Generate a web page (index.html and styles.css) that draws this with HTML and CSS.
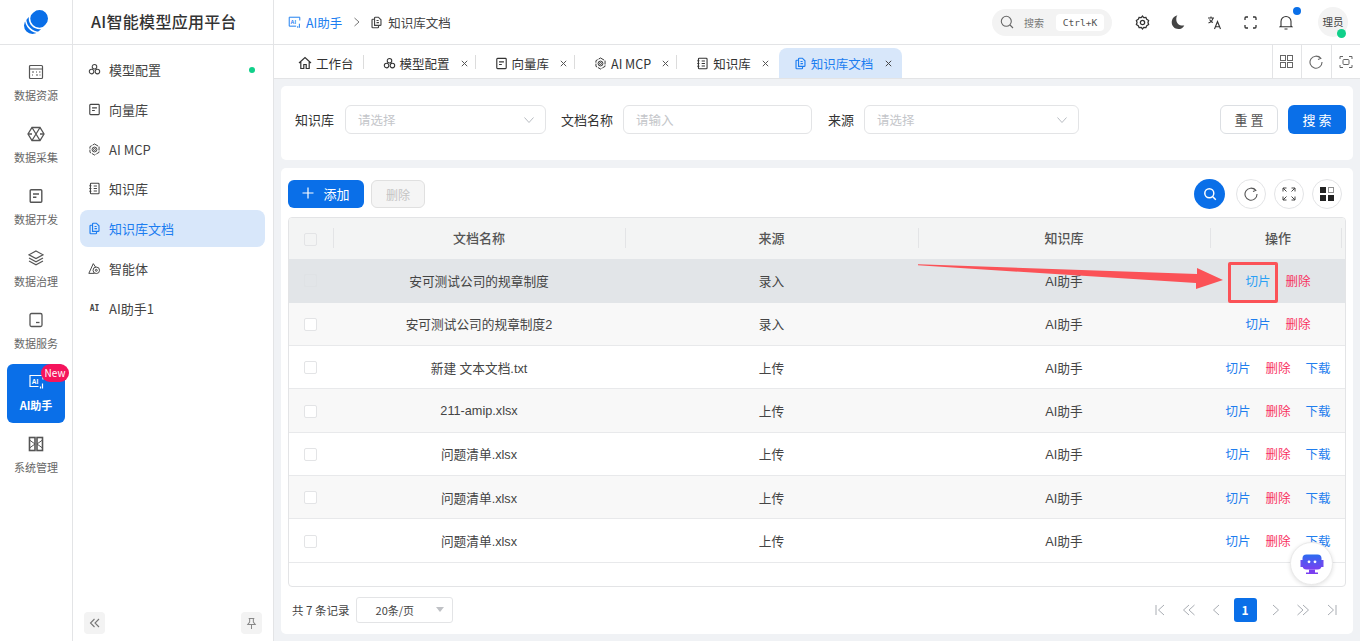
FILE: index.html
```html
<!DOCTYPE html>
<html lang="zh-CN">
<head>
    <meta charset="UTF-8">
    <meta name="viewport" content="width=device-width, initial-scale=1.0">
    <title>知识库文档 - AI智能模型应用平台</title>
    <link rel="stylesheet" href="styles.css">
</head>
<body>
    <svg class="icon-defs" width="0" height="0">
        <defs>
            <linearGradient id="chat-grad" x1="0" y1="0" x2="0" y2="1">
                <stop offset="0" stop-color="#2b6cf0"/>
                <stop offset="1" stop-color="#7a3ff0"/>
            </linearGradient>
        </defs>
        <symbol id="i-model" viewBox="0 0 16 16" fill="none" stroke="currentColor" stroke-width="1.3">
            <circle cx="8" cy="4.6" r="2.8"/><circle cx="4.4" cy="10.6" r="2.8"/><circle cx="11.6" cy="10.6" r="2.8"/>
        </symbol>
        <symbol id="i-vector" viewBox="0 0 16 16" fill="none" stroke="currentColor" stroke-width="1.4">
            <rect x="2.2" y="1.7" width="11.6" height="12.6" rx="1"/><path d="M5 6h6M5 9.2h3.4"/>
        </symbol>
        <symbol id="i-mcp" viewBox="0 0 16 16" fill="none" stroke="currentColor" stroke-width="1.2">
            <path d="M8 1.2l5.6 3.3v7L8 14.8l-5.6-3.3v-7z" stroke-dasharray="5 1.2"/><circle cx="8" cy="8" r="3"/><circle cx="8" cy="8" r="1.2"/>
        </symbol>
        <symbol id="i-book" viewBox="0 0 16 16" fill="none" stroke="currentColor" stroke-width="1.3">
            <rect x="3" y="1.6" width="10.6" height="12.8" rx="1"/><path d="M1.6 4.5h2.6M1.6 8h2.6M1.6 11.5h2.6M7 5h4M7 8h4M7 11h4"/>
        </symbol>
        <symbol id="i-docs" viewBox="0 0 16 16" fill="none" stroke="currentColor" stroke-width="1.4">
            <path d="M5.6 11.6V2.4c0-.5.4-.9.9-.9h3.8l3.2 3.2v6c0 .5-.4.9-.9.9z"/><path d="M5.6 4H3.4c-.5 0-.9.4-.9.9v8.7c0 .5.4.9.9.9h6.2c.5 0 .9-.4.9-.9v-2"/><path d="M8 5.6h2.6M8 8.2h3"/>
        </symbol>
        <symbol id="i-agent" viewBox="0 0 16 16" fill="none" stroke="currentColor" stroke-width="1.2">
            <path d="M6.5 2L1 14h7"/><path d="M6.5 2l3 4.5"/><circle cx="10.2" cy="10.2" r="4"/><circle cx="10.2" cy="10.2" r="1.2"/>
        </symbol>
        <symbol id="i-res" viewBox="0 0 16 16" fill="none" stroke="currentColor" stroke-width="1.2">
            <rect x="1.5" y="1.5" width="13" height="13" rx="1"/><path d="M1.5 5h13M4 8h2M8 8h1M11 8h1.5M4 11h1M8 11h2M11.5 11h1"/>
        </symbol>
        <symbol id="i-collect" viewBox="0 0 18 16" fill="none" stroke="currentColor" stroke-width="1.3">
            <path d="M5 1.5h8L17 8l-4 6.5H5L1 8z"/><path d="M5 1.5L13 14.5M13 1.5L5 14.5M1 8h4M13 8h4"/>
        </symbol>
        <symbol id="i-layers" viewBox="0 0 16 16" fill="none" stroke="currentColor" stroke-width="1.1">
            <path d="M8 1L15 4.8 8 8.6 1 4.8z"/><path d="M1 8l7 3.8L15 8M1 11l7 3.8 7-3.8"/>
        </symbol>
        <symbol id="i-serve" viewBox="0 0 16 16" fill="none" stroke="currentColor" stroke-width="1.3">
            <rect x="2" y="1.5" width="12" height="13" rx="1.5"/><path d="M8 10.5h3.5"/>
        </symbol>
        <symbol id="i-sys" viewBox="0 0 16 16" fill="none" stroke="currentColor" stroke-width="1.6">
            <rect x="1.5" y="1.5" width="5.5" height="13"/><rect x="9" y="1.5" width="5.5" height="13"/><path d="M1.5 4L7 8l-5.5 4M14.5 4L9 8l5.5 4" stroke-width="1"/>
        </symbol>
        <symbol id="i-close" viewBox="0 0 10 10" fill="none" stroke="currentColor" stroke-width="1.1">
            <path d="M2 2l6 6M8 2L2 8"/>
        </symbol>
        <symbol id="i-chev" viewBox="0 0 12 12" fill="none" stroke="currentColor" stroke-width="1">
            <path d="M1.5 3.5L6 8.5l4.5-5"/>
        </symbol>
    </svg>

    <div class="app">
        <!-- first column -->
        <aside class="rail">
            <div class="rail-logo">
                <svg width="26" height="26" viewBox="0 0 26 26">
                    <path d="M16.5 9.5L9.5 16.5" stroke="#0a6fe8" stroke-width="17" stroke-linecap="round"/>
                    <circle cx="16.5" cy="9.5" r="10" fill="none" stroke="#fff" stroke-width="1.5"/>
                    <circle cx="16.5" cy="9.5" r="14" fill="none" stroke="#fff" stroke-width="1.5"/>
                </svg>
            </div>
            <nav class="rail-nav">
                <a class="rail-item"><svg width="16" height="16"><use href="#i-res"/></svg><span>数据资源</span></a>
                <a class="rail-item"><svg width="18" height="16"><use href="#i-collect"/></svg><span>数据采集</span></a>
                <a class="rail-item"><svg width="16" height="16"><use href="#i-vector"/></svg><span>数据开发</span></a>
                <a class="rail-item"><svg width="16" height="16"><use href="#i-layers"/></svg><span>数据治理</span></a>
                <a class="rail-item"><svg width="16" height="16"><use href="#i-serve"/></svg><span>数据服务</span></a>
                <a class="rail-item active">
                    <svg width="17" height="16" viewBox="0 0 16 16" fill="none" stroke="currentColor" stroke-width="1.2"><path d="M14.5 5.5V1.5h-13v11H10M12 14.5v-2M14 14.5v-5"/><text x="3.2" y="9.6" class="icon-text">AI</text></svg>
                    <span>AI助手</span><em class="badge-new">New</em>
                </a>
                <a class="rail-item"><svg width="16" height="16"><use href="#i-sys"/></svg><span>系统管理</span></a>
            </nav>
        </aside>

        <!-- second column -->
        <aside class="side">
            <div class="side-title">AI智能模型应用平台</div>
            <nav class="side-nav">
                <a class="side-item"><svg width="13" height="13"><use href="#i-model"/></svg>模型配置<i class="side-dot"></i></a>
                <a class="side-item"><svg width="13" height="13"><use href="#i-vector"/></svg>向量库</a>
                <a class="side-item"><svg width="13" height="13"><use href="#i-mcp"/></svg>AI MCP</a>
                <a class="side-item"><svg width="13" height="13"><use href="#i-book"/></svg>知识库</a>
                <a class="side-item active"><svg width="13" height="13"><use href="#i-docs"/></svg>知识库文档</a>
                <a class="side-item"><svg width="13" height="13"><use href="#i-agent"/></svg>智能体</a>
                <a class="side-item"><span class="mini-ai">AI</span>AI助手1</a>
            </nav>
            <div class="side-foot">
                <button class="foot-btn">
                    <svg width="12" height="12" viewBox="0 0 12 12" fill="none" stroke="#777" stroke-width="1.1"><path d="M5.5 2L1.5 6l4 4M10 2L6 6l4 4"/></svg>
                </button>
                <button class="foot-btn">
                    <svg width="13" height="13" viewBox="0 0 14 14" fill="none" stroke="#888" stroke-width="1.1"><path d="M4 1.5h6M5 1.5v4L3 8h8L9 5.5v-4M7 8v5"/></svg>
                </button>
            </div>
        </aside>

        <main class="main">
            <header class="topbar">
                <div class="crumbs">
                    <svg class="crumb-blue" width="13" height="13" viewBox="0 0 16 16" fill="none" stroke="currentColor" stroke-width="1.2"><path d="M14.5 5.5V1.5h-13v11H10M12 14.5v-2M14 14.5v-5"/><text x="3.2" y="9.6" class="icon-text">AI</text></svg>
                    <span class="crumb-blue">AI助手</span>
                    <svg class="crumb-sep" width="8" height="10" viewBox="0 0 8 10" fill="none" stroke="#777" stroke-width="1"><path d="M1.5 1L6 5 1.5 9"/></svg>
                    <svg width="13" height="13"><use href="#i-docs"/></svg>
                    <span>知识库文档</span>
                </div>
                <div class="top-tools">
                    <div class="global-search">
                        <svg width="14" height="14" viewBox="0 0 14 14" fill="none" stroke="#666" stroke-width="1.1"><circle cx="6.3" cy="6.3" r="5"/><path d="M10 10l3 3"/></svg>
                        <span>搜索</span>
                        <kbd>Ctrl+K</kbd>
                    </div>
                    <button class="tool-btn">
                        <svg width="15" height="15" viewBox="0 0 14 14" fill="none" stroke="#333" stroke-width="1.2"><path d="M7 1l1.2 1.5 2-.2.8 1.8 1.7 1L12.1 7l.6 1.9-1.7 1-.8 1.8-2-.2L7 13l-1.2-1.5-2 .2-.8-1.8-1.7-1L1.9 7l-.6-1.9 1.7-1 .8-1.8 2 .2z"/><circle cx="7" cy="7" r="2"/></svg>
                    </button>
                    <button class="tool-btn">
                        <svg width="16" height="16" viewBox="0 0 14 14"><path d="M6.5 1C3.5 1.7 1.5 4.2 1.5 7.3c0 3.4 2.6 5.9 5.8 5.9 2.2 0 4.3-1.2 5.2-3.2-3.7.8-7-1.6-7-5.2 0-1.700.3-3.300 1-3.800z" fill="#444"/></svg>
                    </button>
                    <button class="tool-btn">
                        <svg width="15" height="15" viewBox="0 0 15 15" fill="none" stroke="#333" stroke-width="1.1"><path d="M1 3h6M4 1.5V3M6 3c-.4 2.3-2 4-4.5 5M2.5 4.500c.8 1.500 2 2.500 3.500 3M7.500 14l3-7.500 3 7.500M8.500 11.700h4"/></svg>
                    </button>
                    <button class="tool-btn">
                        <svg width="13" height="13" viewBox="0 0 13 13" fill="none" stroke="#333" stroke-width="1.3"><path d="M1 4V2a1 1 0 0 1 1-1h2M9 1h2a1 1 0 0 1 1 1v2M12 9v2a1 1 0 0 1-1 1H9M4 12H2a1 1 0 0 1-1-1V9"/></svg>
                    </button>
                    <button class="tool-btn bell">
                        <svg width="14" height="15" viewBox="0 0 14 15" fill="none" stroke="#333" stroke-width="1.1"><path d="M2 11V6.5a5 5 0 0 1 10 0V11l1 .8H1zM5.5 14h3"/></svg>
                        <i class="bell-dot"></i>
                    </button>
                    <div class="avatar">理员<i class="avatar-dot"></i></div>
                </div>
            </header>

            <div class="tabs">
                <div class="tab-list">
                    <a class="tab no-close"><svg width="14" height="14" viewBox="0 0 14 14" fill="none" stroke="#333" stroke-width="1.2"><path d="M1 7l6-5.5L13 7M2.8 6v6.5h3v-4h2.4v4h3V6"/></svg>工作台</a>
                    <a class="tab"><svg width="13" height="13"><use href="#i-model"/></svg>模型配置<svg class="tab-x" width="9" height="9"><use href="#i-close"/></svg></a>
                    <a class="tab"><svg width="13" height="13"><use href="#i-vector"/></svg>向量库<svg class="tab-x" width="9" height="9"><use href="#i-close"/></svg></a>
                    <a class="tab"><svg width="13" height="13"><use href="#i-mcp"/></svg>AI MCP<svg class="tab-x" width="9" height="9"><use href="#i-close"/></svg></a>
                    <a class="tab last"><svg width="13" height="13"><use href="#i-book"/></svg>知识库<svg class="tab-x" width="9" height="9"><use href="#i-close"/></svg></a>
                    <a class="tab active"><svg width="13" height="13"><use href="#i-docs"/></svg>知识库文档<svg class="tab-x" width="9" height="9"><use href="#i-close"/></svg></a>
                </div>
                <div class="tab-tools">
                    <button><svg width="13" height="13" viewBox="0 0 13 13" fill="none" stroke="#666"><rect x=".5" y=".5" width="5" height="5"/><rect x="7.5" y=".5" width="5" height="5"/><rect x=".5" y="7.5" width="5" height="5"/><rect x="7.5" y="7.5" width="5" height="5"/></svg></button>
                    <button><svg width="14" height="14" viewBox="0 0 14 14" fill="none" stroke="#666" stroke-width="1.1"><path d="M11.5 3.2A6 6 0 1 0 13 7M9.5 1.2l2.3 2.2-2.8 1"/></svg></button>
                    <button><svg width="14" height="14" viewBox="0 0 14 14" fill="none" stroke="#666"><path d="M1 4V1.5h3M10 1.5h3V4M13 10v2.5h-3M4 12.5H1V10"/><rect x="4" y="4.5" width="6" height="5" rx="1"/></svg></button>
                </div>
            </div>

            <div class="content">
                <section class="card filter-card">
                    <label class="f-label">知识库</label>
                    <div class="f-box w-201">请选择<svg width="12" height="12"><use href="#i-chev"/></svg></div>
                    <label class="f-label">文档名称</label>
                    <div class="f-box w-189">请输入</div>
                    <label class="f-label">来源</label>
                    <div class="f-box w-215">请选择<svg width="12" height="12"><use href="#i-chev"/></svg></div>
                    <div class="f-actions">
                        <button class="btn btn-plain">重 置</button>
                        <button class="btn btn-blue">搜 索</button>
                    </div>
                </section>

                <section class="card table-card">
                    <div class="toolbar">
                        <button class="btn btn-blue btn-add"><svg width="12" height="12" viewBox="0 0 12 12" stroke="#fff" stroke-width="1.2"><path d="M6 .5v11M.5 6h11"/></svg>添加</button>
                        <button class="btn btn-off">删除</button>
                        <div class="round-tools">
                            <button class="round blue"><svg width="14" height="14" viewBox="0 0 14 14" fill="none" stroke="#fff" stroke-width="1.5"><circle cx="6.3" cy="6.3" r="4.5"/><path d="M9.8 9.8l3 3"/></svg></button>
                            <button class="round"><svg width="14" height="14" viewBox="0 0 14 14" fill="none" stroke="#555" stroke-width="1.1"><path d="M11.5 3.2A6 6 0 1 0 13 7M9.5 1.2l2.3 2.2-2.8 1"/></svg></button>
                            <button class="round"><svg width="14" height="14" viewBox="0 0 14 14" fill="none" stroke="#444" stroke-width="1"><path d="M1 4.5V1h3.5M1 1l3.5 3.5M9.5 1H13v3.5M13 1L9.5 4.5M13 9.5V13H9.5M13 13L9.5 9.5M4.5 13H1V9.5M1 13l3.5-3.5"/></svg></button>
                            <button class="round"><svg width="14" height="14" viewBox="0 0 14 14"><g fill="#222"><rect width="6" height="6"/><rect y="8" width="6" height="6"/><rect x="8" y="8" width="6" height="6"/></g><rect x="8.5" y=".5" width="5" height="5" fill="none" stroke="#222" stroke-dasharray="1 1"/></svg></button>
                        </div>
                    </div>

                    <div class="table-wrap">
                        <table class="doc-table">
                            <colgroup>
                                <col class="c-check"><col class="c-wide"><col class="c-mid"><col class="c-wide"><col>
                            </colgroup>
                            <thead>
                                <tr>
                                    <th class="cell-check"><i class="check"></i></th>
                                    <th>文档名称</th>
                                    <th>来源</th>
                                    <th>知识库</th>
                                    <th class="th-last">操作</th>
                                </tr>
                            </thead>
                            <tbody>
                                <tr class="hover">
                                    <td class="cell-check"><i class="check"></i></td><td>安可测试公司的规章制度</td><td>录入</td><td>AI助手</td>
                                    <td class="ops"><a class="op-slice">切片</a><a class="op-del">删除</a></td>
                                </tr>
                                <tr>
                                    <td class="cell-check"><i class="check"></i></td><td>安可测试公司的规章制度2</td><td>录入</td><td>AI助手</td>
                                    <td class="ops"><a class="op-slice">切片</a><a class="op-del">删除</a></td>
                                </tr>
                                <tr>
                                    <td class="cell-check"><i class="check"></i></td><td>新建 文本文档.txt</td><td>上传</td><td>AI助手</td>
                                    <td class="ops"><a class="op-slice">切片</a><a class="op-del">删除</a><a class="op-slice">下载</a></td>
                                </tr>
                                <tr>
                                    <td class="cell-check"><i class="check"></i></td><td>211-amip.xlsx</td><td>上传</td><td>AI助手</td>
                                    <td class="ops"><a class="op-slice">切片</a><a class="op-del">删除</a><a class="op-slice">下载</a></td>
                                </tr>
                                <tr>
                                    <td class="cell-check"><i class="check"></i></td><td>问题清单.xlsx</td><td>上传</td><td>AI助手</td>
                                    <td class="ops"><a class="op-slice">切片</a><a class="op-del">删除</a><a class="op-slice">下载</a></td>
                                </tr>
                                <tr>
                                    <td class="cell-check"><i class="check"></i></td><td>问题清单.xlsx</td><td>上传</td><td>AI助手</td>
                                    <td class="ops"><a class="op-slice">切片</a><a class="op-del">删除</a><a class="op-slice">下载</a></td>
                                </tr>
                                <tr>
                                    <td class="cell-check"><i class="check"></i></td><td>问题清单.xlsx</td><td>上传</td><td>AI助手</td>
                                    <td class="ops"><a class="op-slice">切片</a><a class="op-del">删除</a><a class="op-slice">下载</a></td>
                                </tr>
                            </tbody>
                        </table>
                    </div>

                    <div class="pager-row">
                        <span class="total">共 7 条记录</span>
                        <div class="size-select">20条/页<i class="caret"></i></div>
                        <div class="pager">
                            <svg width="12" height="12" viewBox="0 0 12 12"><path d="M2 1v10M10 1L4.5 6l5.5 5"/></svg>
                            <svg width="14" height="12" viewBox="0 0 14 12"><path d="M7 1L1.5 6 7 11M12.5 1L7 6l5.5 5"/></svg>
                            <svg width="8" height="12" viewBox="0 0 8 12"><path d="M7 1L1.5 6 7 11"/></svg>
                            <b class="page-on">1</b>
                            <svg width="8" height="12" viewBox="0 0 8 12"><path d="M1 1l5.5 5L1 11"/></svg>
                            <svg width="14" height="12" viewBox="0 0 14 12"><path d="M1.5 1L7 6l-5.5 5M7 1l5.5 5L7 11"/></svg>
                            <svg width="12" height="12" viewBox="0 0 12 12"><path d="M2 1l5.5 5L2 11M10 1v10"/></svg>
                        </div>
                    </div>
                </section>
            </div>
        </main>
    </div>

    <!-- annotation drawn over the screenshot -->
    <svg class="mark-arrow" width="310" height="30" viewBox="918 262 310 30"><path d="M918 264.3L1197 274 1197 268 1223 280 1196 289 1196 283 918 265.3z" fill="#fb5257"/></svg>
    <div class="mark-box"></div>

    <button class="chat-fab">
        <svg width="26" height="24" viewBox="0 0 26 24">
            <path d="M1.5 8h3v7h-3zM21.5 8h3v7h-3z" fill="#6a4cf0"/>
            <rect x="3.5" y="2.5" width="19" height="15" rx="4" fill="url(#chat-grad)"/>
            <path d="M10 17.5h6v3h3V22H7v-1.5h3z" fill="#7a3ff0"/>
            <circle cx="10" cy="9.8" r="1.4" fill="#fff"/><circle cx="16" cy="9.8" r="1.4" fill="#fff"/>
        </svg>
    </button>
</body>
</html>
```

FILE: styles.css
```css
* {
    margin: 0;
    padding: 0;
    box-sizing: border-box;
}

html, body {
    height: 100%;
    overflow: hidden;
}

body {
    font-family: "Noto Sans CJK SC", "Noto Sans", sans-serif;
    font-size: 13px;
    color: #333;
    background: #fff;
}

button {
    font-family: inherit;
    border: none;
    background: none;
    cursor: pointer;
}

a {
    cursor: pointer;
}

.icon-defs {
    position: absolute;
}

.icon-text {
    font-family: "Liberation Sans", sans-serif;
    font-size: 6.5px;
    font-weight: 700;
    fill: currentColor;
    stroke: none;
}

.app {
    display: flex;
    height: 641px;
}

/* rail */
.rail {
    width: 73px;
    flex-shrink: 0;
    border-right: 1px solid #e3e4e6;
}

.rail-logo {
    height: 45px;
    border-bottom: 1px solid #e3e4e6;
    display: flex;
    align-items: center;
    justify-content: center;
}

.rail-nav {
    display: flex;
    flex-direction: column;
    gap: 3px;
    padding: 9px 7px 0;
}

.rail-item {
    position: relative;
    height: 59px;
    display: flex;
    flex-direction: column;
    align-items: center;
    padding-top: 10px;
    gap: 7px;
    font-size: 11px;
    line-height: 17px;
    color: #666;
    border-radius: 6px;
}

.rail-item svg {
    height: 16px;
    color: #555;
}

.rail-item.active {
    background: #0a6fe8;
    color: #fff;
    font-weight: 700;
}

.rail-item.active svg {
    color: #fff;
}

.badge-new {
    position: absolute;
    top: 0;
    right: -4px;
    height: 18px;
    width: 28px;
    border-radius: 9px;
    background: #f5145c;
    font-style: normal;
    font-weight: 400;
    font-size: 10px;
    line-height: 18px;
    text-align: center;
    color: #fff;
}

/* second column */
.side {
    width: 201px;
    flex-shrink: 0;
    display: flex;
    flex-direction: column;
    border-right: 1px solid #e3e4e6;
}

.side-title {
    height: 45px;
    flex-shrink: 0;
    border-bottom: 1px solid #e3e4e6;
    padding-left: 18px;
    font-size: 16px;
    font-weight: 500;
    letter-spacing: 0.3px;
    line-height: 43px;
    color: #333;
}

.side-nav {
    display: flex;
    flex-direction: column;
    gap: 2.75px;
    padding: 6px 8px 0 7px;
    flex: 1;
}

.side-item {
    height: 37px;
    display: flex;
    align-items: center;
    gap: 8px;
    padding-left: 8px;
    border-radius: 8px;
    color: #444;
}

.side-item.active {
    background: #d8e7fa;
    color: #1c7df0;
}

.side-dot {
    width: 6px;
    height: 6px;
    margin-left: auto;
    margin-right: 10px;
    border-radius: 50%;
    background: #10d08a;
}

.mini-ai {
    width: 13px;
    font-family: "DejaVu Sans Mono", monospace;
    font-size: 8px;
    font-weight: 700;
    text-align: center;
}

.side-foot {
    display: flex;
    justify-content: space-between;
    padding: 0 11px 7px 11px;
}

.foot-btn {
    width: 21px;
    height: 22px;
    border-radius: 4px;
    background: #f3f3f3;
    display: flex;
    align-items: center;
    justify-content: center;
}

/* main */
.main {
    flex: 1;
    min-width: 0;
    display: flex;
    flex-direction: column;
}

.topbar {
    height: 45px;
    flex-shrink: 0;
    border-bottom: 1px solid #e3e4e6;
    display: flex;
    align-items: center;
    justify-content: space-between;
    padding: 0 12px 0 14px;
}

.crumbs {
    display: flex;
    align-items: center;
    gap: 5px;
    font-size: 12.5px;
    color: #444;
}

.crumb-blue {
    color: #1c7df0;
}

.crumb-sep {
    margin: 0 4px 0 6px;
}

.top-tools {
    display: flex;
    align-items: center;
}

.global-search {
    width: 120px;
    height: 27px;
    border-radius: 14px;
    background: #f3f3f3;
    display: flex;
    align-items: center;
    padding-left: 8px;
    font-size: 10px;
    color: #777;
}

.global-search span {
    margin-left: 10px;
}

.global-search kbd {
    margin-left: 12px;
    width: 48px;
    height: 17px;
    border-radius: 4px;
    background: #fff;
    font-family: "DejaVu Sans Mono", monospace;
    font-size: 9.5px;
    line-height: 17px;
    text-align: center;
    color: #555;
}

.tool-btn {
    position: relative;
    width: 36px;
    height: 28px;
    display: flex;
    align-items: center;
    justify-content: center;
}

.tool-btn:first-of-type {
    margin-left: 12px;
}

.bell-dot {
    position: absolute;
    top: -1px;
    right: 3px;
    width: 8px;
    height: 8px;
    border-radius: 50%;
    background: #0a6fe8;
}

.avatar {
    position: relative;
    width: 30px;
    height: 30px;
    margin-left: 14px;
    border-radius: 50%;
    background: #f3f3f3;
    font-size: 10.5px;
    line-height: 30px;
    text-align: center;
    color: #444;
    white-space: nowrap;
}

.avatar-dot {
    position: absolute;
    right: 2px;
    bottom: -1px;
    width: 9px;
    height: 9px;
    border-radius: 50%;
    background: #10d08a;
}

/* tabs */
.tabs {
    height: 34px;
    flex-shrink: 0;
    border-bottom: 1px solid #e3e4e6;
    display: flex;
    justify-content: space-between;
}

.tab-list {
    display: flex;
    align-items: stretch;
    padding-left: 5px;
    padding-top: 3px;
}

.tab {
    position: relative;
    display: flex;
    align-items: center;
    gap: 4px;
    padding: 0 7px 0 19px;
    font-size: 12.5px;
    color: #333;
}

.tab::after {
    content: "";
    position: absolute;
    right: 0;
    top: 7px;
    height: 14px;
    width: 1px;
    background: #dcdcdc;
}

.tab.no-close {
    padding-left: 19px;
    padding-right: 10px;
}

.tab.last::after,
.tab.active::after {
    display: none;
}

.tab-x {
    margin-left: 6px;
    color: #555;
}

.tab.active {
    background: #d8e7fa;
    color: #1c7df0;
    border-radius: 8px 8px 0 0;
    padding: 0 9px 0 15px;
}

.tab.active .tab-x {
    color: #444;
    margin-left: 7px;
}

.tab.last {
    padding-right: 9px;
}

.tab-tools {
    display: flex;
}

.tab-tools button {
    width: 29.5px;
    display: flex;
    align-items: center;
    justify-content: center;
    border-left: 1px solid #e3e4e6;
}

/* content */
.content {
    flex: 1;
    background: #f0f2f5;
    padding: 7px;
    display: flex;
    flex-direction: column;
    gap: 8px;
}

.card {
    background: #fff;
    border-radius: 5px;
}

.filter-card {
    height: 74px;
    flex-shrink: 0;
    display: flex;
    align-items: center;
    padding: 0 7px 7px 14px;
}

.f-label {
    color: #333;
    font-size: 13px;
    white-space: nowrap;
}

.f-box {
    height: 29px;
    margin-left: 11px;
    margin-right: 15px;
    padding: 0 10px 0 12px;
    border: 1px solid #e3e4e6;
    border-radius: 6px;
    display: flex;
    align-items: center;
    justify-content: space-between;
    font-size: 12.5px;
    color: #c4c6ca;
}

.f-box svg {
    color: #b8bcc2;
}

.w-201 { width: 201px; }
.w-189 { width: 189px; margin-left: 10px; margin-right: 16px; }
.w-215 { width: 215px; margin-left: 10px; }

.f-actions {
    margin-left: auto;
    display: flex;
    gap: 10px;
}

.btn {
    height: 29px;
    width: 58px;
    border-radius: 6px;
    font-size: 13px;
}

.btn-blue {
    background: #0a6fe8;
    color: #fff;
}

.btn-plain {
    background: #fff;
    border: 1px solid #dcdfe3;
    color: #555;
}

.btn-off {
    width: 54px;
    height: 28px;
    margin-top: 1px;
    background: #f5f5f5;
    border: 1px solid #e0e0e0;
    color: #c4c4c4;
    font-size: 12px;
}

.table-card {
    flex: 1;
    padding: 11px 7px 0;
    display: flex;
    flex-direction: column;
}

.toolbar {
    height: 38px;
    flex-shrink: 0;
    display: flex;
    align-items: flex-start;
    gap: 7px;
}

.btn-add {
    width: 76px;
    height: 28px;
    margin-top: 1px;
    padding-bottom: 2px;
    display: flex;
    align-items: center;
    justify-content: center;
    gap: 9px;
}

.round-tools {
    margin-left: auto;
    margin-right: 4px;
    display: flex;
    gap: 8px;
}

.round {
    width: 30px;
    height: 30px;
    border-radius: 50%;
    border: 1px solid #e3e4e6;
    display: flex;
    align-items: center;
    justify-content: center;
}

.round.blue {
    width: 31px;
    margin-right: 3px;
    border: none;
    background: #0a6fe8;
}

.table-wrap {
    height: 370px;
    flex-shrink: 0;
    border: 1px solid #e3e4e6;
    border-radius: 4px;
    overflow: hidden;
}

.doc-table {
    width: 100%;
    table-layout: fixed;
    border-collapse: collapse;
    font-family: "Liberation Sans", "Noto Sans CJK SC", sans-serif;
    font-size: 12.7px;
    color: #444;
}

.c-check { width: 45px; }
.c-wide { width: 292px; }
.c-mid { width: 293px; }

.doc-table th {
    position: relative;
    height: 41px;
    padding-right: 2px;
    padding-bottom: 3px;
    background: #f3f4f4;
    font-weight: 500;
    font-size: 13px;
    color: #555;
}

.doc-table th.cell-check {
    padding-bottom: 0;
}

.doc-table th.th-last {
    padding-right: 0;
}

.doc-table th::after {
    content: "";
    position: absolute;
    right: 0;
    top: 10px;
    height: 20px;
    width: 1px;
    background: #e3e4e6;
}

.doc-table th.th-last::after {
    right: 3px;
}

.doc-table td {
    height: 43.3px;
    padding-right: 2px;
    text-align: center;
    border-bottom: 1px solid #e8e9eb;
}

.doc-table td.ops {
    padding-right: 0;
}

.doc-table tbody tr:nth-child(even) td {
    background: #f8f8f8;
}

.doc-table tbody tr.hover td {
    background: #e2e5e8;
    border-bottom-color: #e2e5e8;
}

.check {
    display: inline-block;
    vertical-align: middle;
    width: 13px;
    height: 13px;
    border: 1px solid #e3e4e6;
    border-radius: 2px;
    background: #fff;
}

.doc-table th .check {
    background: #f3f4f4;
}

.doc-table tr.hover .check {
    background: #e2e5e8;
    border-color: #dfe2e5;
}

.ops {
    white-space: nowrap;
}

.ops a {
    display: inline-block;
    margin: 0 7.5px;
    font-size: 12.5px;
}

.op-slice {
    color: #1f7eee;
}

.op-del {
    color: #f8305f;
}

tr.hover .op-slice {
    color: #2aa0f5;
}

.pager-row {
    flex: 1;
    display: flex;
    align-items: center;
    padding: 0 4px 2px;
    font-size: 11.5px;
    color: #444;
}

.size-select {
    position: relative;
    width: 97px;
    height: 26px;
    margin-left: 6px;
    padding-left: 19px;
    border: 1px solid #e3e4e6;
    border-radius: 3px;
    font-size: 11px;
    line-height: 24px;
}

.total {
    white-space: nowrap;
}

.caret {
    position: absolute;
    right: 8px;
    top: 9px;
    border-left: 4.5px solid transparent;
    border-right: 4.5px solid transparent;
    border-top: 5px solid #bfc1c5;
}

.pager {
    margin-left: auto;
    margin-right: 4px;
    display: flex;
    align-items: center;
    gap: 16px;
}

.pager svg {
    fill: none;
    stroke: #a9adb3;
    stroke-width: 1;
}

.page-on {
    width: 23px;
    height: 24px;
    margin: 0 -0.5px 0 -2px;
    border-radius: 3px;
    background: #0a6fe8;
    color: #fff;
    font-size: 12px;
    line-height: 24px;
    text-align: center;
}

/* overlays */
.mark-arrow {
    position: absolute;
    left: 918px;
    top: 262px;
}

.mark-box {
    position: absolute;
    left: 1228px;
    top: 262px;
    width: 50px;
    height: 41px;
    border: 3.5px solid #fb5257;
    border-radius: 2px;
}

.chat-fab {
    position: absolute;
    left: 1290px;
    top: 542px;
    width: 43px;
    height: 43px;
    border-radius: 50%;
    background: #fff;
    border: 1px solid #eaeaea;
    box-shadow: 0 1px 4px rgba(0, 0, 0, 0.12);
    display: flex;
    align-items: center;
    justify-content: center;
}
```
